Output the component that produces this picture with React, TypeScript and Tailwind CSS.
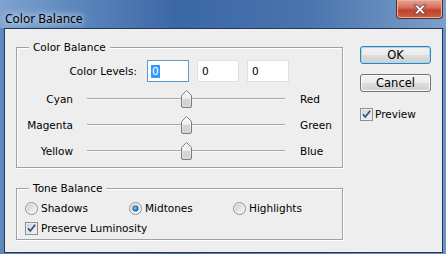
import React from "react";

const T = "font-['DejaVu_Sans',sans-serif] text-[10.5px] leading-[13px] text-black";

function Thumb() {
  return (
    <svg width="11" height="18" viewBox="0 0 11 18" className="block">
      <defs>
        <linearGradient id="tg" x1="0" y1="0" x2="0" y2="1">
          <stop offset="0" stopColor="#fbfbfb" />
          <stop offset="0.5" stopColor="#ececec" />
          <stop offset="1" stopColor="#d6d6d6" />
        </linearGradient>
      </defs>
      <path d="M0.5 5.5 L5.5 0.5 L10.5 5.5 V16 Q10.5 17.5 9 17.5 H2 Q0.5 17.5 0.5 16 Z" fill="url(#tg)" stroke="#7c7c7c" />
      <rect x="2" y="9" width="7" height="7" fill="#d4d4d4" />
    </svg>
  );
}

function Slider({ left, right }: { left: string; right: string }) {
  return (
    <div className="flex items-center h-[18px]">
      <div className={`${T} w-[56px] text-right`}>{left}</div>
      <div className="relative ml-[14px] w-[198px] h-[18px] flex items-center">
        <div className="w-full h-[2px] border-t border-[#a8a8a8] border-b border-b-[#f8f8f8]" />
        <div className="absolute left-[94px] top-0">
          <Thumb />
        </div>
      </div>
      <div className={`${T} ml-[15px]`}>{right}</div>
    </div>
  );
}

function CheckBox() {
  return (
    <svg width="13" height="13" viewBox="0 0 13 13" className="block shrink-0">
      <defs>
        <linearGradient id="cg" x1="0" y1="0" x2="1" y2="1">
          <stop offset="0" stopColor="#cfd2d6" />
          <stop offset="1" stopColor="#f7f7f7" />
        </linearGradient>
      </defs>
      <rect x="0.5" y="0.5" width="12" height="12" fill="#f4f4f4" stroke="#8e8f8f" />
      <rect x="2" y="2" width="9" height="9" fill="url(#cg)" stroke="#dadcdf" strokeWidth="0.6" />
      <path d="M3 6.3 L5.3 9 L10.2 2.8" fill="none" stroke="#2b4f86" strokeWidth="1.7" />
    </svg>
  );
}

function Radio({ on }: { on?: boolean }) {
  return (
    <svg width="13" height="13" viewBox="0 0 13 13" className="block shrink-0">
      <defs>
        <linearGradient id="rg" x1="0" y1="0" x2="1" y2="1">
          <stop offset="0" stopColor="#c9cbce" />
          <stop offset="1" stopColor="#fafafa" />
        </linearGradient>
        <radialGradient id="rd" cx="0.45" cy="0.45" r="0.6">
          <stop offset="0" stopColor="#7fd0ff" />
          <stop offset="0.6" stopColor="#1e79c8" />
          <stop offset="1" stopColor="#0f4f8f" />
        </radialGradient>
      </defs>
      <circle cx="6.5" cy="6.5" r="6" fill="#f2f2f2" stroke="#8e8f8f" />
      <circle cx="6.5" cy="6.5" r="4.5" fill="url(#rg)" />
      {on && <circle cx="6.5" cy="6.5" r="3" fill="url(#rd)" />}
    </svg>
  );
}

function Btn({ label, def }: { label: string; def?: boolean }) {
  return (
    <div
      className={`h-[18px] w-[71px] rounded-[3px] border ${
        def ? "border-[#3c7fb1] shadow-[inset_0_0_0_1px_#9fdcfa]" : "border-[#707070] shadow-[inset_0_0_0_1px_#fcfcfc]"
      } bg-[linear-gradient(#f2f2f2_0%,#ebebeb_50%,#dddddd_51%,#cfcfcf_100%)] flex items-center justify-center`}
    >
      <span className="font-['DejaVu_Sans',sans-serif] text-[11.5px] leading-[14px] text-black">{label}</span>
    </div>
  );
}

function Group({ title, h, children }: { title: string; h: string; children: React.ReactNode }) {
  return (
    <div className={`relative w-[327px] ${h} border border-[#a0a0a0] shadow-[1px_1px_0_#ffffff,inset_1px_1px_0_#ffffff]`}>
      <div className={`${T} absolute left-[12px] top-[-7px] px-[4px] bg-[#eeeeee]`}>{title}</div>
      {children}
    </div>
  );
}

function Input({ focused }: { focused?: boolean }) {
  return (
    <div
      className={`w-[42px] h-[22px] bg-white border ${
        focused ? "border-[#5b9bd5]" : "border-[#dcdfe4]"
      } flex items-center pl-[3px]`}
    >
      {focused ? (
        <span className={`${T} bg-[#3399ff] text-white px-[1px]`}>0</span>
      ) : (
        <span className={`${T} px-[1px]`}>0</span>
      )}
    </div>
  );
}

export default function App() {
  return (
    <div className="w-[446px] h-[254px] flex flex-col bg-[linear-gradient(90deg,#5f88bf_0%,#4a76b0_40%,#6f93c4_100%)] overflow-hidden">
      <div className="h-[28px] flex items-start justify-between bg-[linear-gradient(90deg,#7fa3cf_0%,#5f89bf_15%,#3b67a4_40%,#4a75ae_70%,#7d9fcb_100%)]">
        <div className="pl-[5px] pt-[5px]">
          <span className="font-['Noto_Sans',sans-serif] text-[12px] leading-[16px] text-black [text-shadow:0_0_6px_#e6effa,0_0_10px_#d5e4f5]">
            Color Balance
          </span>
        </div>
        <div className="mr-[3px] w-[47px] h-[19px] rounded-b-[4px] border border-t-0 border-[#5b2a2a] bg-[linear-gradient(#e8a493_0%,#d46a57_45%,#c0412c_55%,#c8603f_100%)] flex items-center justify-center shadow-[inset_0_0_0_1px_#e9b3a6]">
          <svg width="14" height="11" viewBox="0 0 14 11">
            <path d="M1 1 H4.5 L7 3.8 L9.5 1 H13 L9 5.5 L13 10 H9.5 L7 7.2 L4.5 10 H1 L5 5.5 Z" fill="#ffffff" stroke="#4a2323" strokeWidth="0.8" strokeLinejoin="round" />
          </svg>
        </div>
      </div>
      <div className="ml-[4px] mr-[3px] mb-[1px] flex-1 border border-[#22395a] bg-[#eeeeee] flex">
        <div className="pl-[11px] pt-[18px] flex flex-col">
          <Group title="Color Balance" h="h-[121px]">
            <div className="pt-[12px] flex flex-col">
              <div className="flex items-center">
                <div className={`${T} w-[120px] text-right`}>Color Levels:</div>
                <div className="ml-[10px] flex gap-[8px]">
                  <Input focused />
                  <Input />
                  <Input />
                </div>
              </div>
              <div className="mt-[8px] flex flex-col gap-[8px]">
                <Slider left="Cyan" right="Red" />
                <Slider left="Magenta" right="Green" />
                <Slider left="Yellow" right="Blue" />
              </div>
            </div>
          </Group>
          <div className="mt-[20px]">
            <Group title="Tone Balance" h="h-[52px]">
              <div className="pt-[13px] pl-[8px] flex flex-col gap-[7px]">
                <div className="flex">
                  <div className="w-[104px] flex items-center gap-[3px]">
                    <Radio />
                    <span className={T}>Shadows</span>
                  </div>
                  <div className="w-[104px] flex items-center gap-[3px]">
                    <Radio on />
                    <span className={T}>Midtones</span>
                  </div>
                  <div className="flex items-center gap-[3px]">
                    <Radio />
                    <span className={T}>Highlights</span>
                  </div>
                </div>
                <div className="flex items-center gap-[3px]">
                  <CheckBox />
                  <span className={T}>Preserve Luminosity</span>
                </div>
              </div>
            </Group>
          </div>
        </div>
        <div className="ml-[17px] pt-[17px] flex flex-col">
          <Btn label="OK" def />
          <div className="mt-[10px]">
            <Btn label="Cancel" />
          </div>
          <div className="mt-[16px] flex items-center gap-[2px]">
            <CheckBox />
            <span className={T}>Preview</span>
          </div>
        </div>
      </div>
    </div>
  );
}
